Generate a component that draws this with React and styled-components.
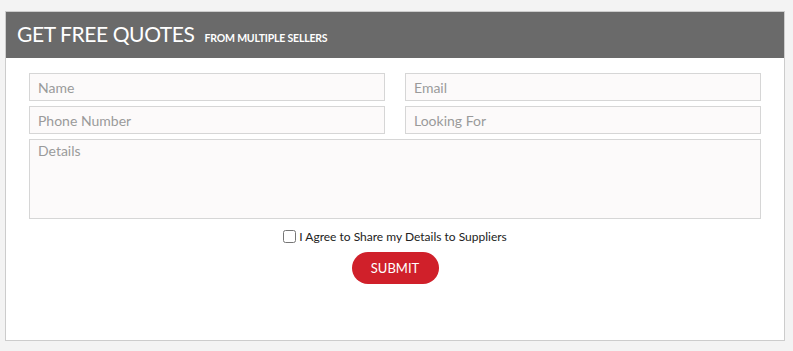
import React from 'react'
import styled, { createGlobalStyle } from 'styled-components'

const GlobalStyle = createGlobalStyle`
  html, body {
    margin: 0;
    padding: 0;
    background: #f3f3f3;
  }
  body {
    font-family: Lato, "Open Sans", sans-serif;
  }
`

const Page = styled.div`
  padding: 11px 8px 10px 5px;
`

const Panel = styled.div`
  width: 778px;
  height: 328px;
  background: #fff;
  border: 1px solid #cccccc;
`

const Header = styled.div`
  height: 46px;
  background: #6a6a6a;
  display: flex;
  align-items: baseline;
  padding: 9px 0 0 11px;
  box-sizing: border-box;
  color: #fff;
`

const Title = styled.span`
  font-size: 21px;
  letter-spacing: -0.4px;
`

const Sub = styled.span`
  font-size: 10.5px;
  font-weight: 700;
  letter-spacing: -0.2px;
  margin-left: 10px;
`

const Form = styled.form`
  padding: 15px 23px 0 23px;
  display: flex;
  flex-direction: column;
  align-items: center;
`

const Grid = styled.div`
  width: 100%;
  display: grid;
  grid-template-columns: 1fr 1fr;
  column-gap: 20px;
  row-gap: 5px;
`

const Field = styled.input`
  height: 28px;
  box-sizing: border-box;
  border: 1px solid #d6d6d6;
  background: #fcfafa;
  padding: 0 8px;
  font-family: inherit;
  font-size: 14px;
  color: #555;
  outline: none;
  &::placeholder {
    color: #9a9a9a;
  }
`

const Area = styled.textarea`
  grid-column: 1 / -1;
  height: 80px;
  box-sizing: border-box;
  border: 1px solid #d6d6d6;
  background: #fcfafa;
  padding: 2px 8px;
  font-family: inherit;
  font-size: 14px;
  resize: none;
  outline: none;
  &::placeholder {
    color: #9a9a9a;
  }
`

const Agree = styled.label`
  margin-top: 10px;
  display: flex;
  align-items: center;
  font-size: 12px;
  color: #222;
`

const Check = styled.input`
  width: 13px;
  height: 13px;
  margin: 0 3px 0 0;
`

const Submit = styled.button`
  margin-top: 8px;
  width: 87px;
  height: 32px;
  border: none;
  border-radius: 16px;
  background: #d0202a;
  color: #fff;
  font-family: inherit;
  font-size: 13px;
  cursor: pointer;
`

export default function App() {
  return (
    <Page>
      <GlobalStyle />
      <Panel>
        <Header>
          <Title>GET FREE QUOTES</Title>
          <Sub>FROM MULTIPLE SELLERS</Sub>
        </Header>
        <Form onSubmit={e => e.preventDefault()}>
          <Grid>
            <Field placeholder="Name" />
            <Field placeholder="Email" />
            <Field placeholder="Phone Number" />
            <Field placeholder="Looking For" />
            <Area placeholder="Details" />
          </Grid>
          <Agree>
            <Check type="checkbox" />
            I Agree to Share my Details to Suppliers
          </Agree>
          <Submit type="submit">SUBMIT</Submit>
        </Form>
      </Panel>
    </Page>
  )
}
